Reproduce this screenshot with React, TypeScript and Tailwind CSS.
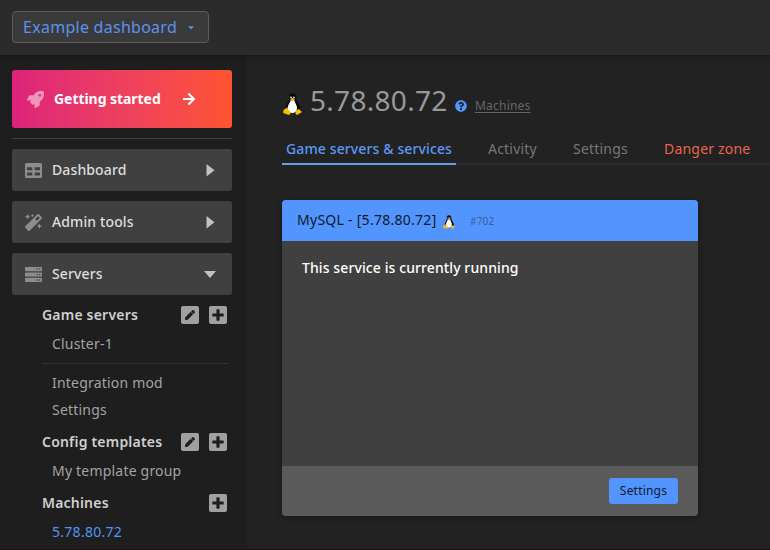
import React from 'react';
import { FaRocket, FaArrowRight, FaMagic, FaPen, FaPlus, FaQuestionCircle } from 'react-icons/fa';

function Tux({ className }: { className: string }) {
  return (
    <svg viewBox="0 0 20 23" className={className} aria-hidden="true">
      <path d="M10 .2C7.200.2 6.200 2.200 6.400 5c.2 2.400-.6 3.600-1.900 5.800C3.200 13 2.600 15.500 2.700 18l3 3.200h9l3.300-3.200c.3-2.700-.4-5-1.800-7.100-1.500-2.200-2.300-3.500-2.300-5.900C13.900 2 12.700.2 10 .2Z" fill="#080808" />
      <path d="M8 7.500c-.5 2.300-2.800 5-3.200 8-.3 2.500 1.500 5.600 5 5.600s5.200-3.100 5-5.600c-.2-2.900-2.300-5.500-2.800-8Z" fill="#fff" />
      <circle cx="8.500" cy="4.700" r="1" fill="#ddd" />
      <circle cx="11.500" cy="4.700" r="1" fill="#ddd" />
      <path d="m7.500 6.500 2.500-1.300 2.700 1.300-2.700 2Z" fill="#f5b80b" />
      <path d="M3.700 15.200 7.800 20c.9 1.700-.5 2.900-2.400 2.700L.8 21.300c-1.200-.5-.2-1.600-.4-2.900-.2-1.200 1.600-.8 2.100-1.800Z" fill="#f7bc0c" />
      <path d="M13.800 16.500c.6 1 2.100 1.600 3 .3l.6.2c.1 1.300 1.200 1.700 2.100 2.400.8.700-.4 1.200-1.400 1.700l-2.200 1.500c-1.300.7-2.900-.2-2.800-1.800Z" fill="#f7bc0c" />
    </svg>
  );
}

function TableIcon() {
  return (
    <svg viewBox="0 0 17 15" className="h-[15px] w-[17px] fill-current">
      <path fillRule="evenodd" d="M1.600 0h13.800Q17 0 17 1.600v11.800q0 1.600-1.600 1.600H1.600Q0 15 0 13.400V1.600Q0 0 1.600 0ZM2 4.200v3h5.300v-3Zm7.700 0v3H15v-3ZM2 9.600v3h5.300v-3Zm7.700 0v3H15v-3Z" />
    </svg>
  );
}

function ServerIcon() {
  return (
    <svg viewBox="0 0 17 15" className="h-[15px] w-[17px] fill-current">
      {[0, 5.4, 10.8].map((y) => (
        <g key={y}>
          <rect y={y} width="17" height="4.200" rx="0.900" />
          <circle cx="12.200" cy={y + 2.1} r="0.750" fill="#404040" />
          <circle cx="14.600" cy={y + 2.1} r="0.750" fill="#404040" />
        </g>
      ))}
    </svg>
  );
}

function MenuButton({ icon, label, open }: { icon: React.ReactNode; label: string; open?: boolean }) {
  return (
    <button className="flex h-[42px] w-full items-center rounded-[3px] bg-[#404040] pl-[13px] pr-[15px] text-sm font-medium tracking-[0.12px] text-[#dedede]">
      <span className="flex w-[17px] shrink-0 justify-center text-[#8d8d8d]">{icon}</span>
      <span className="ml-[10px] flex-1 text-left">{label}</span>
      <svg viewBox="0 0 14 14" className="size-[14px] fill-[#c2c2c2]">
        {open ? <path d="M1 4h12l-6 7Z" /> : <path d="M3.500 1v12.500l8-6.200Z" />}
      </svg>
    </button>
  );
}

function Heading({ label, edit }: { label: string; edit?: boolean }) {
  return (
    <div className="flex h-[18px] items-center gap-[10px] pr-[5px]">
      <h2 className="flex-1 text-sm font-semibold tracking-[0.2px] text-[#cfcfcf]">{label}</h2>
      {edit && <button aria-label="Edit" className="flex size-[18px] items-center justify-center rounded-[2px] bg-[#a0a0a0] text-[#1e1e1e]"><FaPen size={10} /></button>}
      <button aria-label="Add" className="flex size-[18px] items-center justify-center rounded-[2px] bg-[#a0a0a0] text-[#1e1e1e]">
        <svg viewBox="0 0 12 12" className="size-3 fill-current"><path d="M4.400.9Q4.400.3 5 .3h2q.6 0 .6.6v3.500h3.500q.6 0 .6.6v2q0 .6-.6.6H7.600v3.500q0 .6-.6.6H5q-.6 0-.6-.6V7.600H.9Q.3 7.600.3 7V5q0-.6.6-.6h3.500Z" /></svg>
      </button>
    </div>
  );
}

const link = 'block h-5 pl-[10px] text-sm leading-5 tracking-[0.2px] text-[#a3a3a3]';

export default function App() {
  return (
    <div className="flex h-[550px] w-[770px] flex-col overflow-hidden border-b border-[#1c1216] bg-[#222] font-['Noto_Sans','Open_Sans',sans-serif]">
      <header className="z-10 h-[55px] shrink-0 bg-[#2b2b2b] pl-3 pt-[11px] shadow-[0_1px_5px_rgba(0,0,0,0.4)]">
        <button className="flex h-8 w-[197px] items-center rounded-[4px] border border-[#5c5c5c] bg-[#3a3a3a] pl-[10px] text-base tracking-[0.27px] text-[#5a93ee]">
          <span className="w-[154px] whitespace-nowrap text-left">Example dashboard</span>
          <svg viewBox="0 0 6 4" className="ml-[11px] mt-[2px] h-1 w-[6px] fill-current"><path d="M0 .3h6L3 3.400Z" /></svg>
        </button>
      </header>
      <div className="flex min-h-0 flex-1">
        <aside className="w-[247px] shrink-0 bg-[#1e1e1e] pl-3 pr-[15px] pt-[15px]">
          <button className="flex h-[58px] w-full items-center rounded-[3px] bg-linear-to-r from-[#dd227b] to-[#ff532f] pl-[15px] text-sm font-bold tracking-[-0.05px] text-white">
            <FaRocket size={17} className="text-white/50" />
            <span className="ml-[10px] w-[128px] text-left">Getting started</span>
            <FaArrowRight size={14} />
          </button>
          <div className="mb-[10px] mt-[10px] h-px bg-[#404040]" />
          <div className="flex flex-col gap-[10px]">
            <MenuButton icon={<TableIcon />} label="Dashboard" />
            <MenuButton icon={<FaMagic size={17} />} label="Admin tools" />
            <MenuButton icon={<ServerIcon />} label="Servers" open />
          </div>
          <nav className="pl-[30px] pt-[11px]">
            <Heading label="Game servers" edit />
            <a className={link + ' mt-[10px]'}>Cluster-1</a>
            <div className="mr-1 mt-[9px] h-px bg-[#333]" />
            <a className={link + ' mt-[9px]'}>Integration mod</a>
            <a className={link + ' mt-[7px]'}>Settings</a>
            <div className="h-[13px]" />
            <Heading label="Config templates" edit />
            <a className={link + ' mt-[10px]'}>My template group</a>
            <div className="h-[13px]" />
            <Heading label="Machines" />
            <a className="mt-[10px] block h-5 pl-[10px] text-sm leading-5 tracking-[0.28px] text-[#5295f5]">5.78.80.72</a>
          </nav>
        </aside>
        <main className="flex min-w-0 flex-1 flex-col pl-[35px]">
          <div className="mt-[23px] flex h-11 items-center">
            <Tux className="ml-px mt-[7px] h-[22px] w-[19px]" />
            <h1 className="ml-2 w-[138px] text-[28px] leading-[44px] tracking-[0.3px] text-[#999]">5.78.80.72</h1>
            <FaQuestionCircle size={12} className="ml-[7px] mt-[12px] text-[#5295ff]" />
            <a className="ml-2 mt-[12px] text-xs tracking-[0.22px] text-[#666] underline underline-offset-2">Machines</a>
          </div>
          <nav className="mt-3 flex h-[31px] shrink-0 whitespace-nowrap border-b-2 border-[#2c2c2c] text-sm leading-[30px] tracking-[0.2px] text-[#777]">
            <a className="h-[31px] w-[174px] border-b-2 border-[#679ce8] pl-1 font-medium tracking-[0.12px] text-[#5c99f5]">Game servers &amp; services</a>
            <a className="ml-8 w-[85px]">Activity</a>
            <a className="w-[91px]">Settings</a>
            <a className="text-[#e8654e]">Danger zone</a>
          </nav>
          <section className="mt-[35px] flex h-[316px] w-[416px] shrink-0 flex-col overflow-hidden rounded-[4px] bg-[#404040] shadow-[0_2px_6px_rgba(0,0,0,0.3)]">
            <header className="flex h-[41px] shrink-0 items-center bg-[#5295ff] pl-[15px] text-[#111a28]">
              <span className="-mt-px w-[138px] whitespace-nowrap text-sm tracking-[0.27px]">MySQL - [5.78.80.72]</span>
              <Tux className="ml-[8px] mt-[3px] h-[14px] w-3" />
              <span className="ml-[15px] mt-[2px] text-[10px] tracking-[0.2px] text-[#3a5f98]">#702</span>
            </header>
            <p className="flex-1 px-5 pt-[17px] text-sm font-medium leading-5 tracking-[0.1px] text-white">This service is currently running</p>
            <footer className="flex h-[50px] shrink-0 items-center justify-end bg-[#5a5a5a] pr-5">
              <button className="h-[26px] w-[69px] rounded-[3px] bg-[#5295ff] text-xs tracking-[0.2px] text-[#111a28]">Settings</button>
            </footer>
          </section>
        </main>
      </div>
    </div>
  );
}
